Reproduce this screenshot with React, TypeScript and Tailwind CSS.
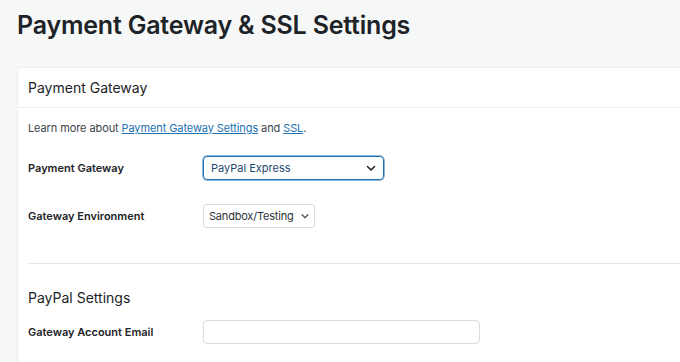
import React from 'react'

const Chevron = ({ className }: { className?: string }) => (
    <svg viewBox="0 0 12 12" className={className} fill="none" stroke="currentColor" strokeWidth="1.6" strokeLinecap="round" strokeLinejoin="round">
        <path d="M2.5 4.5L6 8l3.5-3.5" />
    </svg>
)

const App = () => {
    return (
        <div className="w-[680px] h-[362px] overflow-hidden bg-[#f6f7f7] font-['Inter',sans-serif] text-[#1d2327]">
            <h1 className="pl-[17px] pt-[10px] text-[25px] leading-[30px] font-semibold tracking-[-0.2px]">Payment Gateway &amp; SSL Settings</h1>

            <div className="ml-[17px] mr-[-20px] mt-[27px] bg-white border border-[#eceeef] rounded-[4px]">
                <div className="h-[40px] px-[10px] flex items-center border-b border-[#eceeef]">
                    <p className="text-[14px] leading-[20px]">Payment Gateway</p>
                </div>

                <div className="px-[10px] pt-[12px]">
                    <p className="text-[11px] leading-[16px] text-[#3c434a] tracking-[-0.1px]">
                        Learn more about <a className="text-[#2271b1] underline">Payment Gateway Settings</a> and <a className="text-[#2271b1] underline">SSL</a>.
                    </p>

                    <div className="flex items-center mt-[20px]">
                        <p className="w-[175px] text-[11px] leading-[16px] font-semibold">Payment Gateway</p>
                        <div className="w-[181px] h-[24px] border border-[#2271b1] rounded-[4px] flex items-center justify-between pl-[7px] pr-[6px] shadow-[0_0_0_0.5px_#2271b1]">
                            <span className="text-[11px] leading-[16px] text-[#1e4a72]">PayPal Express</span>
                            <Chevron className="w-[12px] h-[12px] text-[#1d2327]" />
                        </div>
                    </div>

                    <div className="flex items-center mt-[24px]">
                        <p className="w-[175px] text-[11px] leading-[16px] font-semibold">Gateway Environment</p>
                        <div className="w-[112px] h-[24px] border border-[#dcdcde] rounded-[3px] flex items-center justify-between pl-[5px] pr-[4px]">
                            <span className="text-[11px] leading-[16px] text-[#2c3338] tracking-[-0.2px]">Sandbox/Testing</span>
                            <Chevron className="w-[10px] h-[10px] text-[#50575e]" />
                        </div>
                    </div>

                    <div className="mt-[35px] border-t border-[#e5e7e8]" />

                    <p className="mt-[24px] text-[14px] leading-[20px]">PayPal Settings</p>

                    <div className="flex items-center mt-[12px]">
                        <p className="w-[175px] text-[11px] leading-[16px] font-semibold">Gateway Account Email</p>
                        <div className="w-[277px] h-[24px] border border-[#dcdcde] rounded-[4px] bg-white" />
                    </div>
                </div>
                <div className="h-[40px]" />
            </div>
        </div>
    )
}

export default App
